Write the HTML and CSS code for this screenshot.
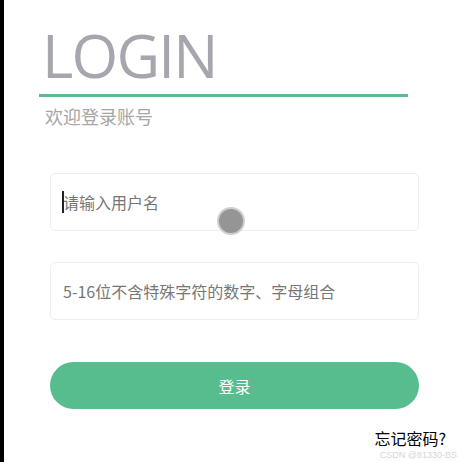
FILE: index.html
```html
<!DOCTYPE html>
<html lang="zh-CN">
<head>
  <meta charset="UTF-8" />
  <title>登录</title>
  <link rel="stylesheet" href="styles.css">
</head>
<body>
  <div class="page">
    <div class="head">
      <h1>LOGIN</h1>
      <p class="welcome">欢迎登录账号</p>
    </div>

    <form class="login-form">
      <div class="field">
        <span class="caret"></span>
        <input type="text" placeholder="请输入用户名">
      </div>
      <div class="field">
        <input type="password" placeholder="5-16位不含特殊字符的数字、字母组合">
      </div>
      <button type="button" class="submit">登录</button>
      <div class="forgot"><a href="#">忘记密码?</a></div>
    </form>

    <span class="touch"></span>
    <span class="mark">CSDN @81330-BS</span>
  </div>
</body>
</html>
```

FILE: styles.css
```css
body {
  margin: 0;
  background: #fff;
  font-family: "Noto Sans", "Noto Sans CJK SC", sans-serif;
}
.page {
  position: relative;
  box-sizing: border-box;
  min-height: 462px;
  border-left: 4px solid #000;
  padding-top: 16px;
}
.head {
  margin-left: 35px;
  width: 369px;
}
h1 {
  margin: 0;
  padding-left: 3px;
  font-family: "Open Sans", sans-serif;
  font-weight: 400;
  font-size: 60px;
  line-height: 78px;
  letter-spacing: -1.75px;
  color: #a7a6ae;
  border-bottom: 3px solid #5cba8f;
}
.welcome {
  margin: 8px 0 0 6px;
  font-size: 18px;
  line-height: 24px;
  color: #a6a6a6;
}
.login-form {
  margin: 44px 0 0 46px;
  width: 369px;
}
.field {
  position: relative;
  margin-bottom: 31px;
}
.field input {
  box-sizing: border-box;
  width: 100%;
  height: 58px;
  padding: 0 12px;
  border: 1px solid #eee;
  border-radius: 5px;
  font-family: "Noto Sans CJK SC", sans-serif;
  font-size: 16px;
  outline: none;
}
.field input::placeholder {
  color: #777;
}
.caret {
  position: absolute;
  left: 12px;
  top: 18px;
  width: 2px;
  height: 22px;
  background: #222;
}
.submit {
  display: block;
  width: 100%;
  height: 47px;
  margin-top: 42px;
  border: none;
  border-radius: 24px;
  background: #58bd8e;
  color: #fff;
  font-family: "Noto Sans CJK SC", sans-serif;
  font-size: 16px;
}
.forgot {
  text-align: right;
  margin-top: 19px;
  margin-right: -27px;
}
.forgot a {
  color: #000;
  text-decoration: none;
  font-size: 16px;
  line-height: 20px;
  font-family: "Noto Sans CJK SC", sans-serif;
}
.touch {
  position: absolute;
  left: 213px;
  top: 207px;
  width: 24px;
  height: 24px;
  border-radius: 50%;
  background: #959595;
  border: 2px solid #cfcfcf;
}
.mark {
  position: absolute;
  right: 4px;
  top: 450px;
  font-family: "Liberation Sans", sans-serif;
  font-size: 9px;
  line-height: 11px;
  color: #d6d6d6;
}
```
